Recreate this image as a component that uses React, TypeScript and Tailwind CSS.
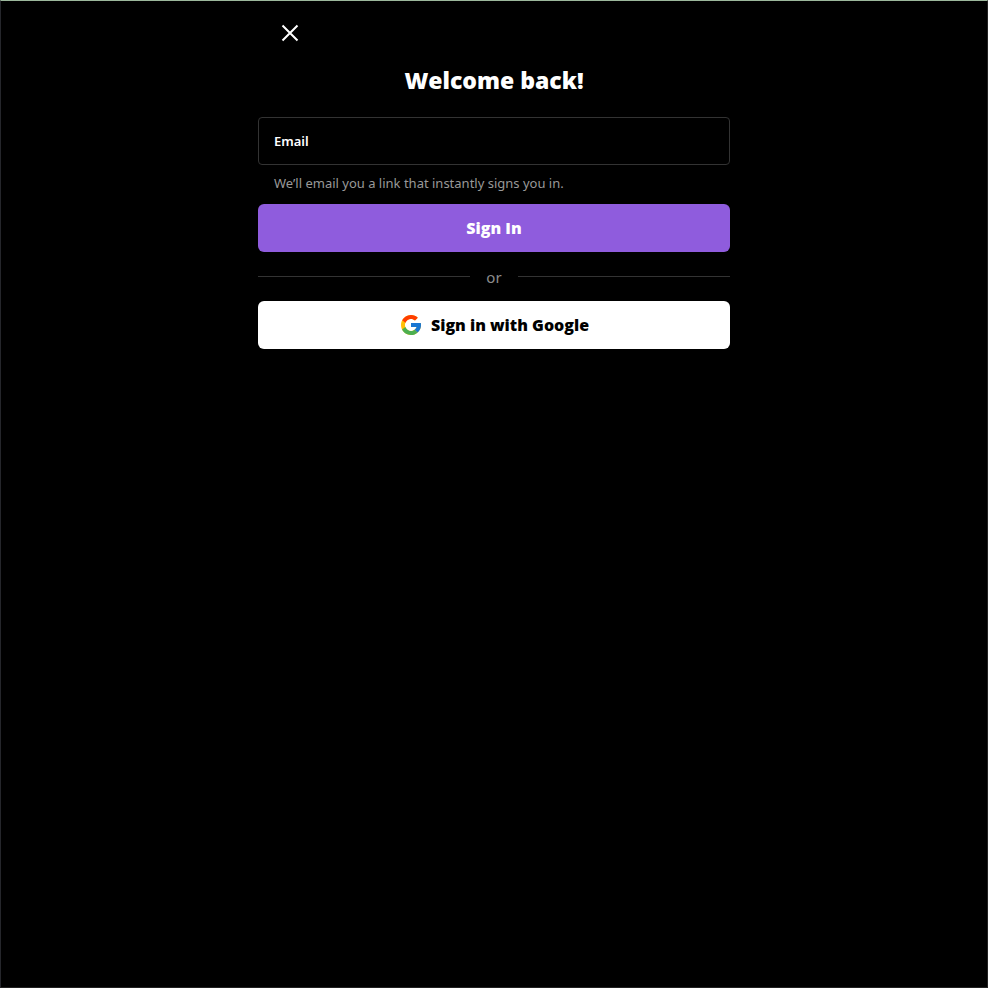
import { FcGoogle } from "react-icons/fc";

function CloseIcon() {
  return (
    <svg viewBox="0 0 24 24" className="size-6" fill="none" stroke="currentColor" strokeWidth="2" aria-hidden="true">
      <path d="M4.5 4.5 19.5 19.5M19.5 4.5 4.5 19.5" />
    </svg>
  );
}

function Divider() {
  return (
    <div className="flex h-[49px] items-center gap-4">
      <span className="h-px flex-1 bg-[#333333]" />
      <span className="text-[15px] leading-5 text-[#8c8c8c]">or</span>
      <span className="h-px flex-1 bg-[#333333]" />
    </div>
  );
}

export default function App() {
  return (
    <div className="min-h-screen border border-t-[#9cb89c] border-r-[#222222] border-b-[#222222] border-l-[#25262b] bg-black font-['Noto_Sans','Open_Sans',sans-serif] text-white">
      <main className="mx-auto w-full max-w-[504px] px-4">
        <div className="flex h-16 items-center px-5">
          <button type="button" aria-label="Close" className="cursor-pointer">
            <CloseIcon />
          </button>
        </div>
        <h1 className="text-center font-['Open_Sans',sans-serif] text-[23px] leading-[30px] font-extrabold">
          Welcome back!
        </h1>
        <form className="mt-[22px]" onSubmit={(e) => e.preventDefault()}>
          <div className="flex h-12 items-center gap-3 rounded border border-[#333333] px-[15px]">
            <label htmlFor="email" className="text-[13px] leading-5 font-semibold">
              Email
            </label>
            <input
              id="email"
              type="email"
              aria-describedby="email-hint"
              className="h-full min-w-0 flex-1 bg-transparent text-[13px] outline-none"
            />
          </div>
          <p id="email-hint" className="mt-2 px-4 text-[13px] leading-5 text-[#999999]">
            We’ll email you a link that instantly signs you in.
          </p>
          <button
            type="submit"
            className="mt-[11px] h-12 w-full cursor-pointer rounded-md bg-[#8f5cdd] font-['Open_Sans',sans-serif] text-base font-extrabold"
          >
            Sign In
          </button>
        </form>
        <Divider />
        <button
          type="button"
          className="flex h-12 w-full cursor-pointer items-center justify-center gap-2 rounded-md bg-white font-['Open_Sans',sans-serif] text-base font-extrabold text-black"
        >
          <FcGoogle className="size-6" aria-hidden="true" />
          Sign in with Google
        </button>
      </main>
    </div>
  );
}
